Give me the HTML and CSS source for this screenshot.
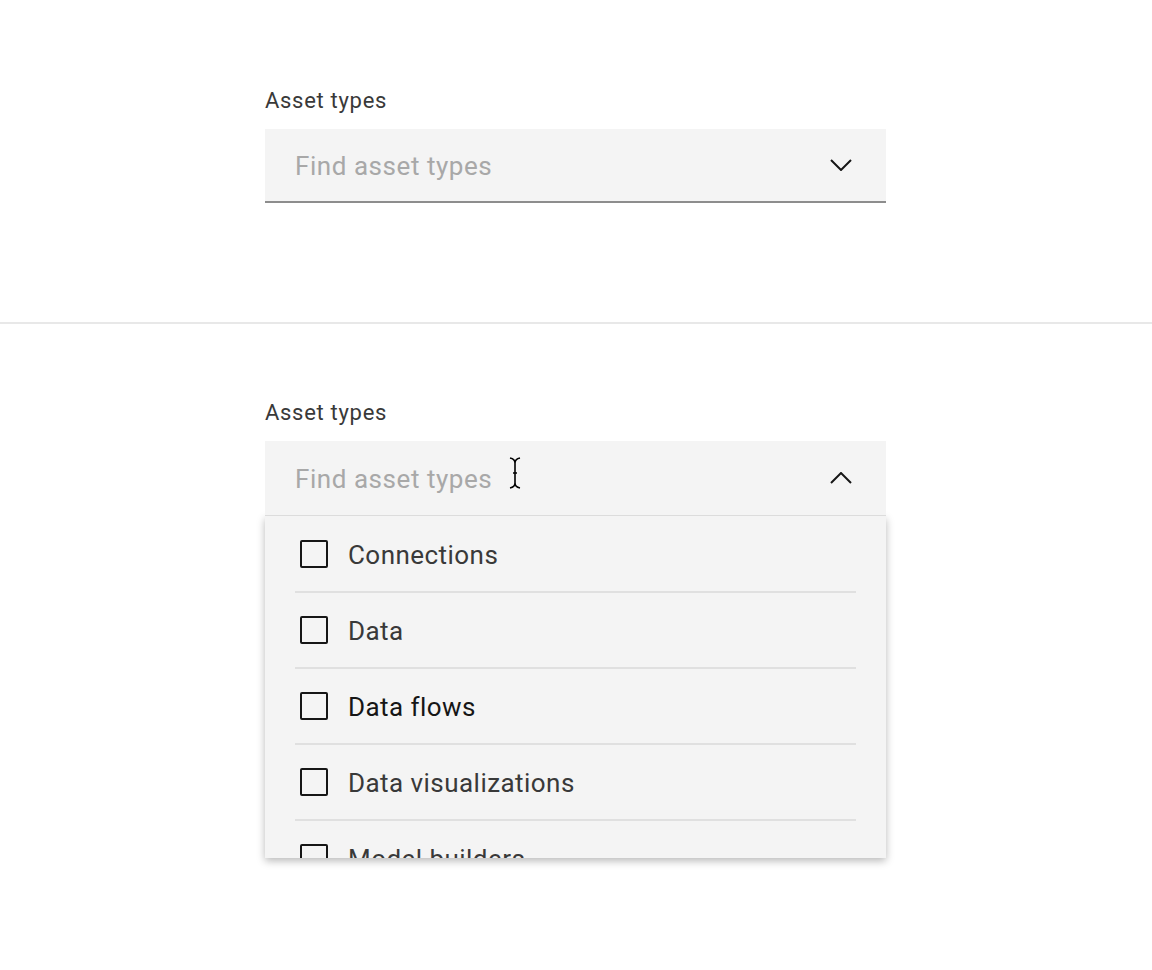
FILE: index.html
```html
<!DOCTYPE html>
<html lang="en">
<head>
<meta charset="utf-8">
<title>Asset types</title>
<link rel="stylesheet" href="styles.css">
</head>
<body>
<section class="panel panel-top">
  <div class="combo">
    <div class="label">Asset types</div>
    <div class="field">
      <span class="placeholder">Find asset types</span>
      <svg class="chevron" width="22" height="12" viewBox="0 0 22 12"><path d="M1 1 L11 11 L21 1" fill="none" stroke="#161616" stroke-width="2"/></svg>
    </div>
  </div>
</section>
<section class="panel panel-bottom">
  <div class="combo">
    <div class="label">Asset types</div>
    <div class="field field-open">
      <span class="placeholder">Find asset types</span>
      <svg class="ibeam" width="14" height="32" viewBox="0 0 14 32"><path d="M2 1 Q7 2 7 6 L7 26 Q7 30 2 31 M12 1 Q7 2 7 6 M7 26 Q7 30 12 31 M5 16 L9 16" fill="none" stroke="#000" stroke-width="1.6"/></svg>
      <svg class="chevron" width="22" height="12" viewBox="0 0 22 12"><path d="M1 11 L11 1 L21 11" fill="none" stroke="#161616" stroke-width="2"/></svg>
    </div>
    <div class="menu">
      <div class="item"><span class="box"></span><span class="text">Connections</span></div>
      <div class="item"><span class="box"></span><span class="text">Data</span></div>
      <div class="item item-hover"><span class="box"></span><span class="text">Data flows</span></div>
      <div class="item"><span class="box"></span><span class="text">Data visualizations</span></div>
      <div class="item"><span class="box"></span><span class="text">Model builders</span></div>
    </div>
  </div>
</section>
</body>
</html>
```
FILE: styles.css
```css
* { box-sizing: border-box; }
html, body { margin: 0; padding: 0; background: #ffffff; }
body {
  font-family: Roboto, "Liberation Sans", sans-serif;
  width: 1152px;
  height: 970px;
  overflow: hidden;
}
.panel { display: flex; justify-content: flex-start; }
.panel-top {
  height: 324px;
  padding-top: 88px;
  border-bottom: 2px solid #e8e8e8;
}
.panel-bottom { padding-top: 76px; }
.combo {
  margin-left: 265px;
  width: 621px;
  display: flex;
  flex-direction: column;
}
.label {
  font-size: 22px;
  color: #393939;
  letter-spacing: 0.7px;
  line-height: 26px;
  margin-bottom: 15px;
}
.field {
  position: relative;
  height: 74px;
  background: #f4f4f4;
  border-bottom: 2px solid #8d8d8d;
  display: flex;
  align-items: center;
  padding: 0 34px 0 30px;
}
.field-open { border-bottom: 1px solid #dcdcdc; height: 75px; }
.placeholder {
  flex: 1;
  font-size: 26px;
  color: #a8a8a8;
  letter-spacing: 0.55px;
  padding-top: 2px;
}
.chevron { display: block; }
.ibeam {
  position: absolute;
  left: 243px;
  top: 16px;
}
.menu {
  height: 342px;
  overflow: hidden;
  background: #f4f4f4;
  box-shadow: 0 3px 8px rgba(0, 0, 0, 0.28);
  padding: 0 30px;
}
.item {
  height: 76px;
  display: flex;
  align-items: center;
  border-bottom: 2px solid #e0e0e0;
  padding-left: 5px;
}
.item:first-child { height: 77px; }
.box {
  width: 28px;
  height: 28px;
  border: 2px solid #161616;
  border-radius: 2px;
  margin-right: 20px;
  flex: none;
}
.text {
  font-size: 26px;
  color: #393939;
  letter-spacing: 0.45px;
  padding-top: 2px;
}
.item-hover .text { color: #161616; }
```
